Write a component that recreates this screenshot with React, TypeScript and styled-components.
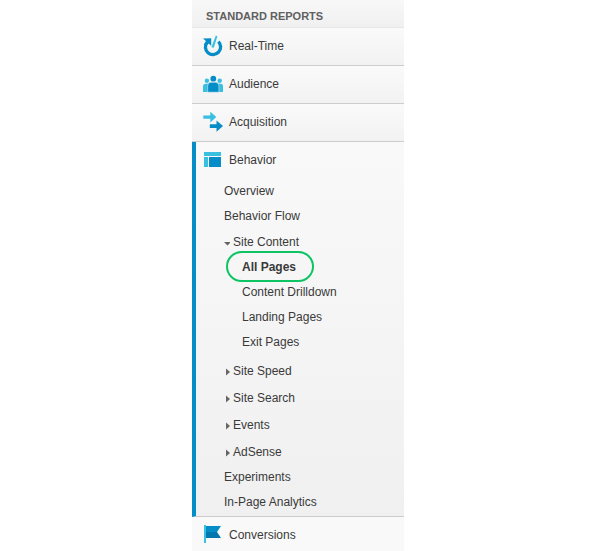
import React from "react";
import styled, { createGlobalStyle } from "styled-components";

const GlobalStyle = createGlobalStyle`
  body {
    margin: 0;
    background: #ffffff;
    color: #3a3a3a;
    font-family: "Liberation Sans", Arial, sans-serif;
    font-size: 12px;
  }
`;

const Sidebar = styled.nav`
  width: 100%;
  max-width: 212px;
  margin: 0 auto;
  overflow: hidden;
`;

const Heading = styled.h2`
  margin: 0;
  padding: 5px 14px 0;
  border-bottom: 1px solid #e6e6e6;
  background: linear-gradient(#f8f8f8, #f0f0f0);
  color: #606060;
  font-size: 11px;
  font-weight: bold;
  line-height: 22px;
`;

const List = styled.ul`
  margin: 0;
  padding: 0;
  list-style: none;
`;

const Section = styled.li<{ $open?: boolean }>`
  border-bottom: 1px solid #cccccc;
  border-left: ${(p) => (p.$open ? "4px solid #058dc7" : "0 solid transparent")};
  padding-bottom: ${(p) => (p.$open ? "1px" : "0")};
  background: ${(p) =>
    p.$open ? "linear-gradient(#f9f9f9, #f0f0f0)" : "linear-gradient(#fafafa, #f2f2f2)"};

  &:last-child {
    border-bottom: 0;
    background: #f9f9f9;
  }
`;

const SectionLink = styled.a<{ $open?: boolean }>`
  display: flex;
  align-items: center;
  gap: 6px;
  height: 35px;
  padding-bottom: 2px;
  padding-left: ${(p) => (p.$open ? "7px" : "11px")};
  color: inherit;
  text-decoration: none;
`;

const IconBox = styled.svg`
  width: 20px;
  height: 22px;
  flex: none;
`;

const SubList = styled.ul`
  margin: 0;
  padding: 0 0 0 28px;
  list-style: none;
`;

const Leaf = styled.li`
  line-height: 25px;
`;

const Group = styled.li`
  line-height: 25px;

  & + & {
    margin-top: 2px;
  }

  ${Leaf} + & {
    margin-top: 1px;
  }
`;

const Toggle = styled.button`
  display: flex;
  align-items: center;
  gap: 3px;
  padding: 0;
  border: 0;
  background: none;
  color: inherit;
  font: inherit;
  line-height: 25px;
`;

const Arrow = styled.svg`
  width: 6px;
  height: 8px;
  flex: none;
  fill: #666666;
`;

const ChildList = styled.ul`
  margin: 0;
  padding: 0 0 2px 18px;
  list-style: none;
`;

const PageLink = styled.a<{ $current?: boolean }>`
  position: relative;
  color: inherit;
  font-weight: ${(p) => (p.$current ? "bold" : "normal")};
  text-decoration: none;
`;

const Highlight = styled.span`
  position: absolute;
  inset: -9px -18px -8px -16px;
  border: 2px solid #0cc562;
  border-radius: 16px;
  pointer-events: none;
`;

const RealTimeIcon = () => (
  <IconBox viewBox="0 0 20 22" aria-hidden="true">
    <path d="M4.2 7.1A7.6 7.6 0 1 0 15.4 6.6" fill="none" stroke="#058dc7" strokeWidth="3.3" />
    <path d="M0 3.4 8.2 3.2 8.2 11 5.8 8.5 2.4 11.4 0.8 9.4 3.4 6.5Z" fill="#058dc7" />
    <path d="M12.8 0.6 14.4 1.2 10.8 12.8 8.4 12.2Z" fill="#39bfe0" />
  </IconBox>
);

const AudienceIcon = () => (
  <IconBox viewBox="0 -1 20 22" aria-hidden="true">
    <g fill="#39bfe0">
      <circle cx="3.9" cy="6.8" r="2.2" />
      <circle cx="16.7" cy="6.8" r="2.2" />
      <path d="M0 18V12.5Q0 9.7 2.8 9.7H6V18ZM20 18V12.5Q20 9.7 17.8 9.7H14.5V18Z" />
    </g>
    <circle cx="10.3" cy="4.7" r="2.9" fill="#058dc7" />
    <path
      d="M4.7 18.2V12Q4.7 8.3 8 8.3H12.6Q15.9 8.3 15.9 12V18.2Z"
      fill="#058dc7"
      stroke="#f7f7f7"
      strokeWidth="0.5"
    />
  </IconBox>
);

const AcquisitionIcon = () => (
  <IconBox viewBox="0 0 20 22" aria-hidden="true">
    <path d="M0.3 4.5H7.3V0.8L13.3 6.1 7.3 11.5V7.8H0.3Z" fill="#39bfe0" />
    <path d="M6.8 13.3H13.5V9.5L20 15 13.5 20.7V16.9H6.8Z" fill="#058dc7" />
  </IconBox>
);

const BehaviorIcon = () => (
  <IconBox viewBox="0 0 20 22" aria-hidden="true">
    <path d="M1 3H18V7H1ZM1 8H5V18H1Z" fill="#39bfe0" />
    <path d="M6 8H18V18H6Z" fill="#058dc7" />
  </IconBox>
);

const ConversionsIcon = () => (
  <IconBox viewBox="0 1 20 22" aria-hidden="true">
    <path d="M1 2H3V20H1Z" fill="#39bfe0" />
    <path d="M3 3H18L14 9H3Z" fill="#058dc7" />
    <path d="M3 9H14L18 15H3Z" fill="#0477af" />
  </IconBox>
);

type Page = { label: string; current?: boolean };

const PageItem = ({ label, current }: Page) => (
  <Leaf>
    <PageLink href="#" $current={current} aria-current={current ? "page" : undefined}>
      {label}
      {current && <Highlight />}
    </PageLink>
  </Leaf>
);

const PageGroup = ({ label, pages }: { label: string; pages?: Page[] }) => (
  <Group>
    <Toggle type="button" aria-expanded={Boolean(pages)}>
      <Arrow viewBox="0 0 6 8" aria-hidden="true">
        <path d={pages ? "M0 3H7L3.5 6.5Z" : "M2 0.5 6 4 2 7.5Z"} />
      </Arrow>
      {label}
    </Toggle>
    {pages && (
      <ChildList>
        {pages.map((page) => (
          <PageItem key={page.label} {...page} />
        ))}
      </ChildList>
    )}
  </Group>
);

type ReportProps = {
  label: string;
  icon: React.ReactNode;
  children?: React.ReactNode;
};

const Report = ({ label, icon, children }: ReportProps) => {
  const open = Boolean(children);
  return (
    <Section $open={open}>
      <SectionLink href="#" $open={open}>
        {icon}
        {label}
      </SectionLink>
      {children}
    </Section>
  );
};

const siteContent: Page[] = [
  { label: "All Pages", current: true },
  { label: "Content Drilldown" },
  { label: "Landing Pages" },
  { label: "Exit Pages" },
];

export default function App() {
  return (
    <>
      <GlobalStyle />
      <Sidebar aria-label="Standard reports">
        <Heading>STANDARD REPORTS</Heading>
        <List>
          <Report label="Real-Time" icon={<RealTimeIcon />} />
          <Report label="Audience" icon={<AudienceIcon />} />
          <Report label="Acquisition" icon={<AcquisitionIcon />} />
          <Report label="Behavior" icon={<BehaviorIcon />}>
            <SubList>
              <PageItem label="Overview" />
              <PageItem label="Behavior Flow" />
              <PageGroup label="Site Content" pages={siteContent} />
              <PageGroup label="Site Speed" />
              <PageGroup label="Site Search" />
              <PageGroup label="Events" />
              <PageGroup label="AdSense" />
              <PageItem label="Experiments" />
              <PageItem label="In-Page Analytics" />
            </SubList>
          </Report>
          <Report label="Conversions" icon={<ConversionsIcon />} />
        </List>
      </Sidebar>
    </>
  );
}
